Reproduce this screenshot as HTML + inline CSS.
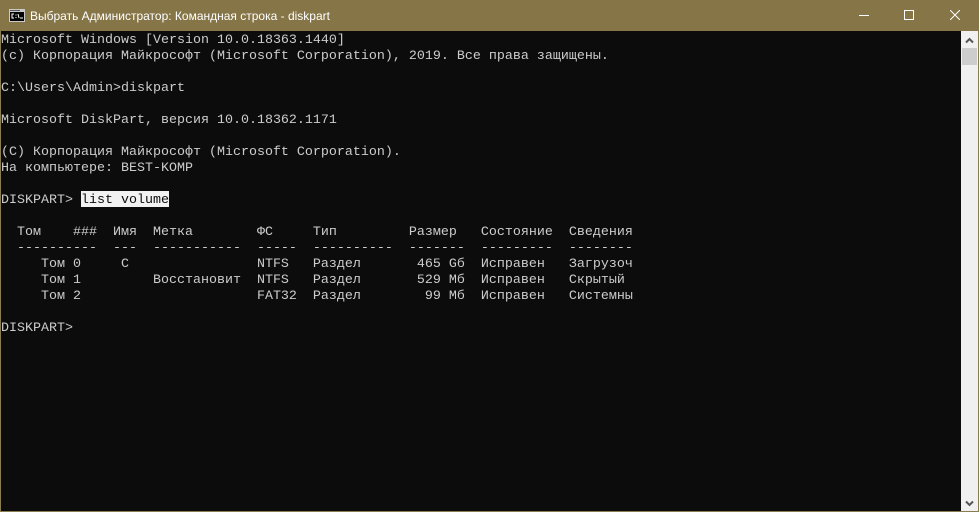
<!DOCTYPE html>
<html lang="ru">
<head>
<meta charset="utf-8">
<title>Командная строка</title>
<style>
html,body{margin:0;padding:0;width:979px;height:512px;overflow:hidden;background:#0c0c0c}
#win{position:absolute;left:0;top:0;width:979px;height:512px;background:#0c0c0c;overflow:hidden}
#bar{position:absolute;left:0;top:0;width:979px;height:31px;background:#857547}
#title{position:absolute;left:30px;top:8px;font:12px/16px "Liberation Sans",sans-serif;color:#fff;white-space:nowrap}
#sel{position:absolute;left:81px;top:191px;width:88px;height:16px;background:#f2f2f2}
#term{position:absolute;left:1px;top:33px;margin:0;font:13.333px/16px "Liberation Mono",monospace;color:#cccccc;white-space:pre}
#term b{font-weight:normal;color:#0c0c0c}
#sb{position:absolute;left:961px;top:31px;width:17px;height:480px;background:#f0f0f0}
#thumb{position:absolute;left:1px;top:17px;width:15px;height:17px;background:#cdcdcd}
.edge{position:absolute;background:#8a7d52}
svg{position:absolute;display:block}
</style>
</head>
<body>
<div id="win">
<div id="bar"></div>
<svg style="left:9px;top:9px" width="16" height="13" viewBox="0 0 16 13">
<rect x="0" y="0" width="16" height="13" fill="#c9c9c9"/>
<rect x="1" y="3" width="14" height="9" fill="#000"/>
<rect x="1" y="1" width="10" height="1" fill="#555"/>
<path d="M5 5H3V9H5M7 5.5V6.5M7 8V9M9 5L10 9M11 9H14" stroke="#fff" stroke-width="1" fill="none"/>
</svg>
<div id="title">Выбрать Администратор: Командная строка - diskpart</div>
<svg style="left:859px;top:15px" width="10" height="1" viewBox="0 0 10 1"><rect width="10" height="1" fill="#fff"/></svg>
<svg style="left:904px;top:10px" width="10" height="10" viewBox="0 0 10 10"><rect x=".5" y=".5" width="9" height="9" fill="none" stroke="#fff"/></svg>
<svg style="left:950px;top:10px" width="10" height="10" viewBox="0 0 10 10"><path d="M0 0L10 10M10 0L0 10" stroke="#fff" stroke-width="1" fill="none"/></svg>
<div id="sel"></div>
<pre id="term">Microsoft Windows [Version 10.0.18363.1440]
(c) Корпорация Майкрософт (Microsoft Corporation), 2019. Все права защищены.

C:\Users\Admin&gt;diskpart

Microsoft DiskPart, версия 10.0.18362.1171

(C) Корпорация Майкрософт (Microsoft Corporation).
На компьютере: BEST-KOMP

DISKPART&gt; <b>list volume</b>

  Том    ###  Имя  Метка        ФС     Тип         Размер   Состояние  Сведения
  ----------  ---  -----------  -----  ----------  -------  ---------  --------
     Том 0     C                NTFS   Раздел       465 Gб  Исправен   Загрузоч
     Том 1         Восстановит  NTFS   Раздел       529 Мб  Исправен   Скрытый
     Том 2                      FAT32  Раздел        99 Мб  Исправен   Системны

DISKPART&gt;</pre>
<div id="sb">
<svg style="left:4px;top:6px" width="9" height="7" viewBox="0 0 9 7"><path d="M1 5.5L4.5 2L8 5.5" fill="none" stroke="#555" stroke-width="2"/></svg>
<div id="thumb"></div>
<svg style="left:4px;top:469px" width="9" height="7" viewBox="0 0 9 7"><path d="M1 1.5L4.5 5L8 1.5" fill="none" stroke="#555" stroke-width="2"/></svg>
</div>
<div class="edge" style="left:0;top:31px;width:1px;height:481px"></div>
<div class="edge" style="left:978px;top:31px;width:1px;height:481px"></div>
<div class="edge" style="left:0;top:511px;width:979px;height:1px"></div>
</div>
</body>
</html>
